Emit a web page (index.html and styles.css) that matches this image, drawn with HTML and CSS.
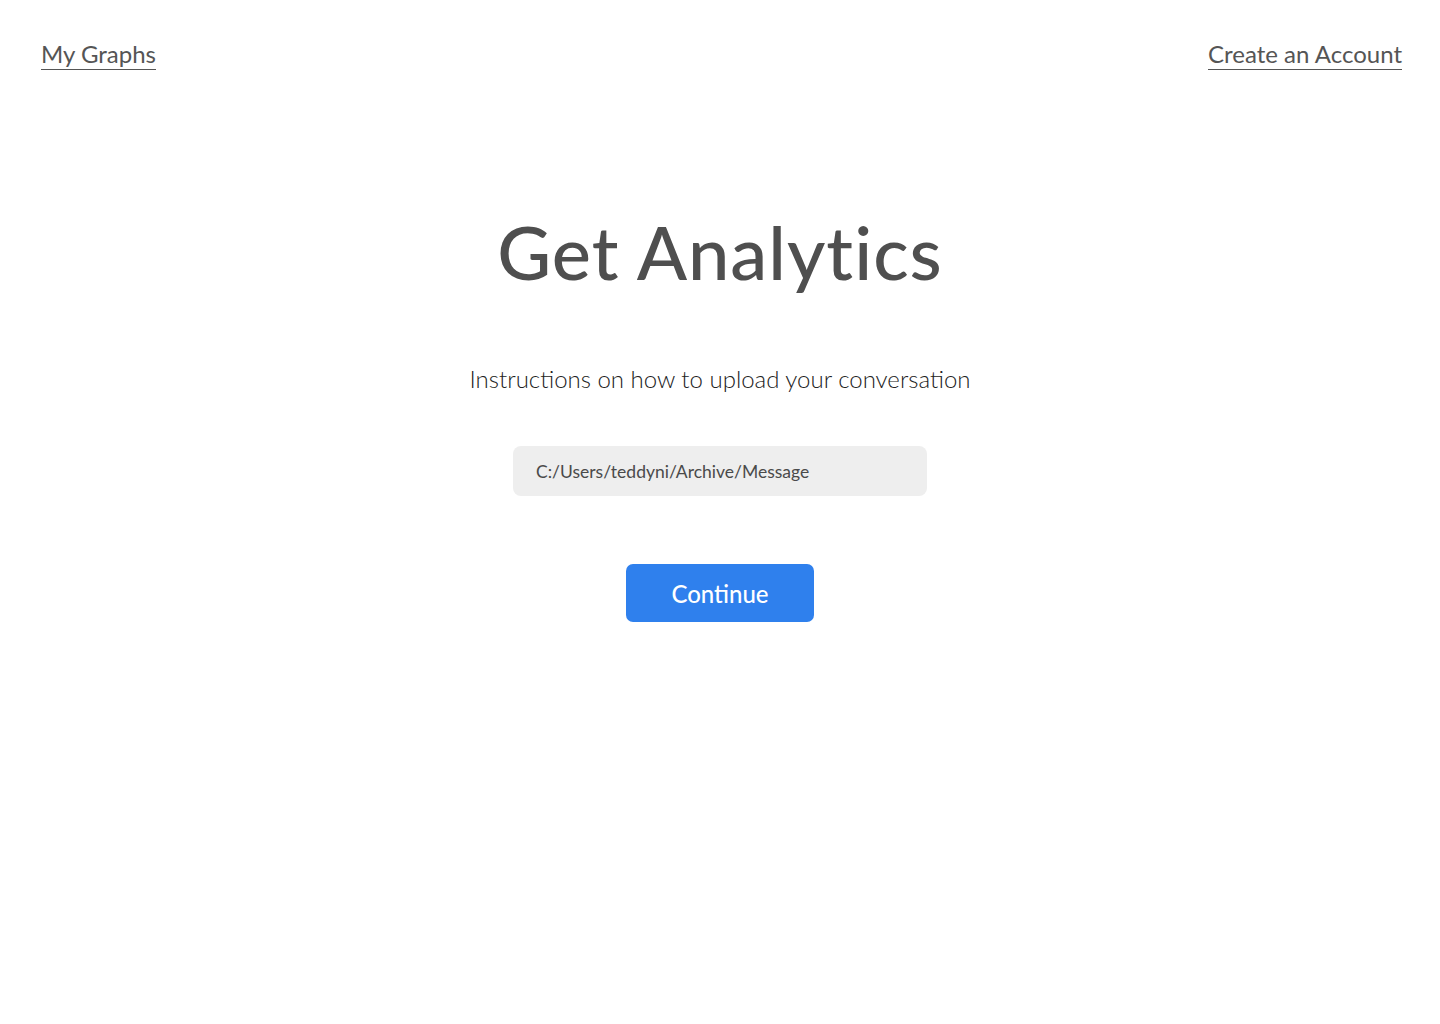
FILE: index.html
```html
<!DOCTYPE html>
<html lang="en">
<head>
<meta charset="utf-8">
<title>Get Analytics</title>
<link rel="stylesheet" href="styles.css">
</head>
<body>
<header class="topbar">
  <a class="nav-link" href="#">My Graphs</a>
  <a class="nav-link" href="#">Create an Account</a>
</header>
<main class="content">
  <h1 class="title">Get Analytics</h1>
  <p class="instructions">Instructions on how to upload your conversation</p>
  <div class="path-field">C:/Users/teddyni/Archive/Message</div>
  <button class="continue" type="button">Continue</button>
</main>
</body>
</html>
```
FILE: styles.css
```css
* { box-sizing: border-box; }
html, body { margin: 0; padding: 0; background: #ffffff; }
body {
  width: 1440px;
  height: 1024px;
  font-family: "Lato", "Liberation Sans", sans-serif;
  color: #4f4f4f;
}
.topbar {
  display: flex;
  justify-content: space-between;
  align-items: flex-start;
  padding: 38px 38px 0 41px;
}
.nav-link {
  font-size: 24px;
  line-height: 31px;
  color: #555555;
  text-decoration: none;
  border-bottom: 1.5px solid #555555;
  padding-bottom: 0;
}
.content {
  display: flex;
  flex-direction: column;
  align-items: center;
}
.title {
  margin: 137px 0 0 0;
  font-family: "Lato", sans-serif;
  font-weight: 500;
  font-size: 74px;
  line-height: 90px;
  color: #4f4f4f;
  letter-spacing: 1px;
}
.instructions {
  margin: 67px 0 0 0;
  font-weight: 300;
  font-size: 24px;
  line-height: 30px;
  color: #222222;
}
.path-field {
  margin-top: 52px;
  width: 414px;
  height: 50px;
  background: #eeeeee;
  border-radius: 8px;
  padding-left: 23px;
  display: flex;
  align-items: center;
  font-size: 17.5px;
  color: #4a4a4a;
}
.continue {
  margin-top: 68px;
  width: 188px;
  height: 58px;
  border: none;
  border-radius: 7px;
  background: #2f80ed;
  color: #ffffff;
  font-family: "Lato", sans-serif;
  font-size: 24px;
  font-weight: 500;
  cursor: pointer;
}
```
